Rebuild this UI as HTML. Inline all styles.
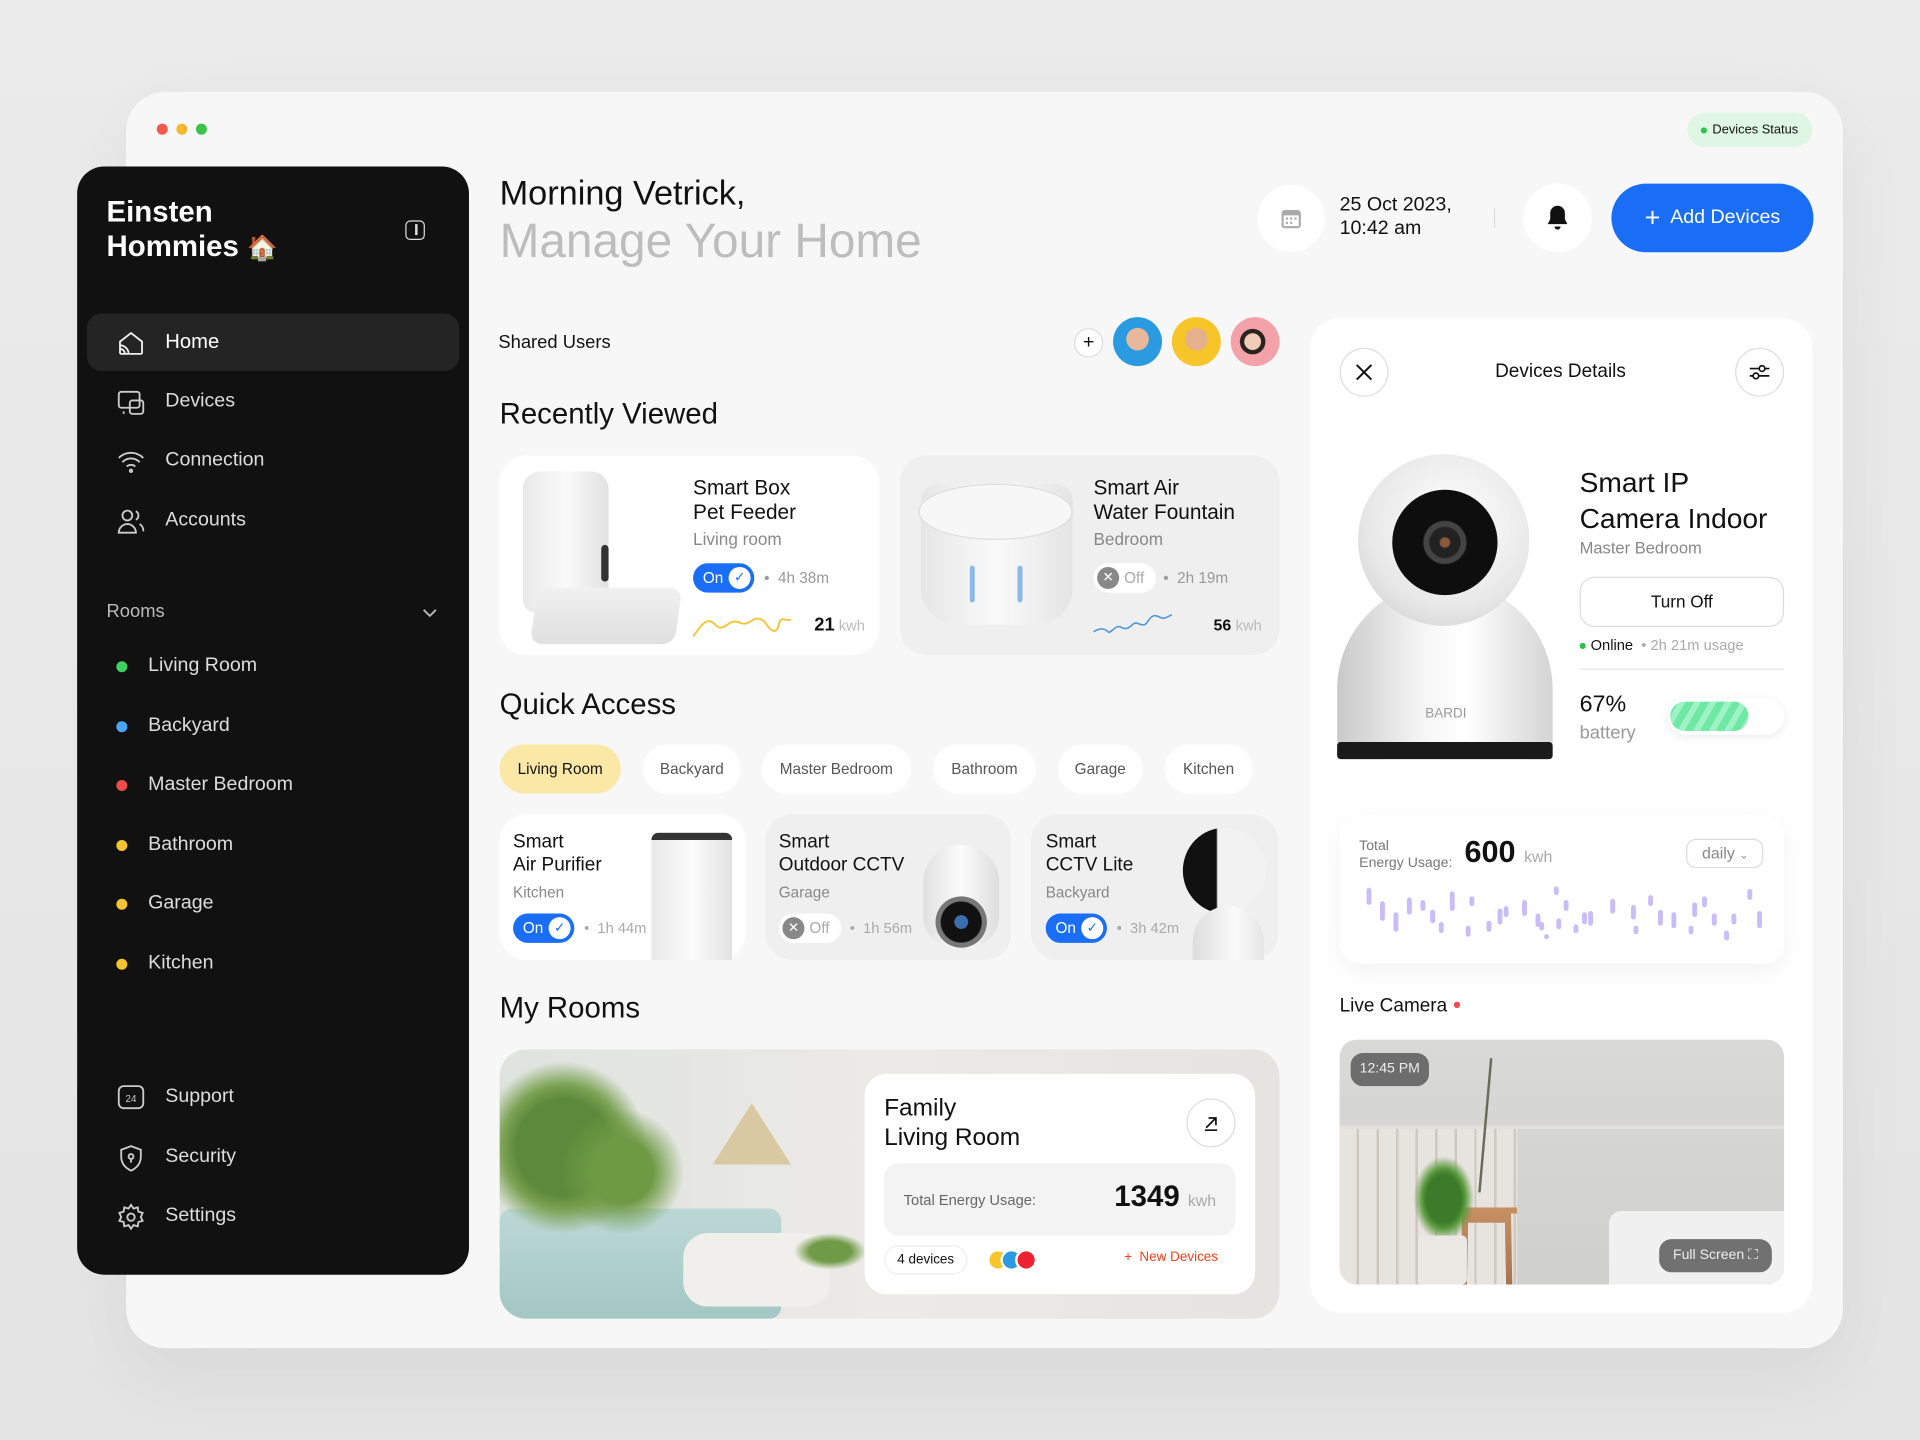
<!DOCTYPE html>
<html><head><meta charset="utf-8">
<style>
*{box-sizing:border-box;margin:0;padding:0}
html,body{width:1920px;height:1440px;overflow:hidden;background:#e8e8e8;font-family:"Liberation Sans",sans-serif;color:#111}
#s{position:absolute;left:0;top:0;width:1568px;height:1176px;transform:scale(1.22449);transform-origin:0 0;background:linear-gradient(#ebebeb,#e4e4e4)}
.a{position:absolute}
.card{background:#fff;border-radius:22px}
.pill{position:absolute;border-radius:999px}
.side{color:#ddd;font-size:16px}
.ico{position:absolute;width:24px;height:24px}
.dot{position:absolute;width:9px;height:9px;border-radius:50%}
.chip{position:absolute;top:608px;height:40px;border-radius:20px;background:#fff;font-size:12.5px;color:#555;display:flex;align-items:center;justify-content:center}
.tog{position:absolute;height:24px;border-radius:12px;display:flex;align-items:center;font-size:12.5px}
.gray{color:#888}
</style></head><body><div id="s">
<!-- main window -->
<div class="a" style="left:103px;top:75px;width:1402px;height:1026px;background:#f7f7f7;border-radius:32px;box-shadow:0 20px 60px rgba(0,0,0,.06)"></div>
<div class="dot" style="left:128px;top:101px;background:#f25a4f"></div>
<div class="dot" style="left:144px;top:101px;background:#f5b82e"></div>
<div class="dot" style="left:160px;top:101px;background:#3cc34a"></div>
<div class="pill" style="left:1378px;top:92px;width:102px;height:28px;background:#dff6e4;font-size:10.5px;display:flex;align-items:center;justify-content:center"><span style="width:5px;height:5px;border-radius:50%;background:#2cc14a;margin-right:4px"></span>Devices Status</div>

<!-- sidebar -->
<div class="a" style="left:63px;top:136px;width:320px;height:905px;background:#111;border-radius:22px"></div>
<div class="a" style="left:87px;top:160px;color:#fff;font-size:24px;font-weight:bold;line-height:28px">Einsten<br>Hommies <span style="font-size:20px">🏠</span></div>
<div class="a" style="left:331px;top:180px;width:16px;height:16px;border:1.6px solid #ddd;border-radius:4px"><div style="position:absolute;left:7px;top:2px;width:1.5px;height:9px;background:#ddd"></div></div>
<div class="a" style="left:71px;top:256px;width:304px;height:47px;background:#242424;border-radius:12px"></div>
<svg class="ico" style="left:95px;top:268px" viewBox="0 0 24 24" fill="none" stroke="#eee" stroke-width="1.5"><path d="M3 11l9-7 9 7v9a1 1 0 0 1-1 1H4a1 1 0 0 1-1-1z"/><path d="M3 17a4 4 0 0 1 4 4M3 14a7 7 0 0 1 7 7"/></svg>
<div class="a" style="left:135px;top:270px;color:#fff;font-size:16.5px">Home</div>
<svg class="ico" style="left:95px;top:317px" viewBox="0 0 24 24" fill="none" stroke="#ccc" stroke-width="1.5"><rect x="2" y="3" width="17" height="13" rx="2"/><rect x="11" y="10" width="11" height="11" rx="2"/><path d="M6 19v2"/></svg>
<div class="a side" style="left:135px;top:319px">Devices</div>
<svg class="ico" style="left:95px;top:365px" viewBox="0 0 24 24" fill="none" stroke="#ccc" stroke-width="1.5"><path d="M2 9a14 14 0 0 1 20 0M5 12.5a9.5 9.5 0 0 1 14 0M8.5 16a5 5 0 0 1 7 0"/><circle cx="12" cy="19.5" r="1"/></svg>
<div class="a side" style="left:135px;top:367px">Connection</div>
<svg class="ico" style="left:95px;top:414px" viewBox="0 0 24 24" fill="none" stroke="#ccc" stroke-width="1.5"><circle cx="9" cy="7" r="4"/><path d="M2 21a7 7 0 0 1 14 0z"/><path d="M16 3.5a4 4 0 0 1 0 7M19 14a6 6 0 0 1 3 6"/></svg>
<div class="a side" style="left:135px;top:416px">Accounts</div>
<div class="a" style="left:87px;top:491px;color:#bbb;font-size:15px">Rooms</div>
<svg class="a" style="left:344px;top:494px;width:14px;height:14px" viewBox="0 0 14 14" fill="none" stroke="#bbb" stroke-width="1.5"><path d="M2 4l5 5 5-5"/></svg>
<div class="dot" style="left:95px;top:540px;background:#3ed160"></div><div class="a side" style="left:121px;top:535px">Living Room</div>
<div class="dot" style="left:95px;top:589px;background:#4aa3ff"></div><div class="a side" style="left:121px;top:584px">Backyard</div>
<div class="dot" style="left:95px;top:637px;background:#f24b4b"></div><div class="a side" style="left:121px;top:632px">Master Bedroom</div>
<div class="dot" style="left:95px;top:686px;background:#f5c330"></div><div class="a side" style="left:121px;top:681px">Bathroom</div>
<div class="dot" style="left:95px;top:734px;background:#f5c330"></div><div class="a side" style="left:121px;top:729px">Garage</div>
<div class="dot" style="left:95px;top:783px;background:#f5c330"></div><div class="a side" style="left:121px;top:778px">Kitchen</div>
<svg class="ico" style="left:95px;top:885px" viewBox="0 0 24 24" fill="none" stroke="#ccc" stroke-width="1.5"><rect x="2" y="2" width="20" height="18" rx="4"/><text x="12" y="15" font-size="8" fill="#ccc" stroke="none" text-anchor="middle" font-family="Liberation Sans">24</text></svg>
<div class="a side" style="left:135px;top:887px">Support</div>
<svg class="ico" style="left:95px;top:934px" viewBox="0 0 24 24" fill="none" stroke="#ccc" stroke-width="1.5"><path d="M12 2l8 3v6c0 5-3.5 9-8 11-4.5-2-8-6-8-11V5z"/><circle cx="12" cy="10.5" r="2"/><path d="M12 12.5v3"/></svg>
<div class="a side" style="left:135px;top:936px">Security</div>
<svg class="ico" style="left:95px;top:982px" viewBox="0 0 24 24" fill="none" stroke="#ccc" stroke-width="1.5"><circle cx="12" cy="12" r="3"/><path d="M12 2l2 3 3.5-1 .5 3.5 3.5 1-1.5 3.5 1.5 3-3.5 1-.5 3.5-3.5-1-2 3-2-3-3.5 1-.5-3.5-3.5-1 1.5-3-1.5-3.5 3.5-1L6.5 4 10 5z"/></svg>
<div class="a side" style="left:135px;top:984px">Settings</div>

<!-- header -->
<div class="a" style="left:408px;top:142px;font-size:28px">Morning Vetrick,</div>
<div class="a" style="left:408px;top:176px;font-size:39px;color:#bdbdbd">Manage Your Home</div>
<div class="pill" style="left:1027px;top:151px;width:55px;height:55px;background:#fff"></div>
<svg class="a" style="left:1044px;top:168px;width:21px;height:21px" viewBox="0 0 24 24" fill="#aaa"><rect x="3" y="4" width="18" height="17" rx="3"/><rect x="5" y="9" width="14" height="10" fill="#fff"/><rect x="7" y="11" width="2" height="2"/><rect x="11" y="11" width="2" height="2"/><rect x="15" y="11" width="2" height="2"/><rect x="7" y="15" width="2" height="2"/><rect x="11" y="15" width="2" height="2"/></svg>
<div class="a" style="left:1094px;top:158px;font-size:16px;line-height:19px">25 Oct 2023,<br>10:42 am</div>
<div class="a" style="left:1220px;top:170px;width:1px;height:16px;background:#ddd"></div>
<div class="pill" style="left:1244px;top:150px;width:56px;height:56px;background:#fff"></div>
<svg class="a" style="left:1262px;top:167px;width:20px;height:22px" viewBox="0 0 20 22"><path d="M10 1a6 6 0 0 0-6 6v5l-2 4h16l-2-4V7a6 6 0 0 0-6-6z" fill="#111"/><path d="M7.5 18a2.5 2.5 0 0 0 5 0z" fill="#111"/></svg>
<div class="pill" style="left:1316px;top:150px;width:165px;height:56px;background:#1a6ef5;color:#fff;font-size:16px;display:flex;align-items:center;justify-content:center"><span style="font-size:22px;margin-right:8px;font-weight:300">+</span>Add Devices</div>

<!-- shared users -->
<div class="a" style="left:407px;top:271px;font-size:15px">Shared Users</div>
<div class="pill" style="left:877px;top:268px;width:24px;height:24px;border:1px solid #ddd;background:#fff;text-align:center;line-height:21px;font-size:16px">+</div>
<div class="pill" style="left:909px;top:259px;width:40px;height:40px;background:radial-gradient(circle at 50% 45%,#e8b89a 0 30%,#2a9be0 32%)"></div>
<div class="pill" style="left:957px;top:259px;width:40px;height:40px;background:radial-gradient(circle at 50% 45%,#e4b08e 0 30%,#f5c52a 32%)"></div>
<div class="pill" style="left:1005px;top:259px;width:40px;height:40px;background:radial-gradient(circle at 45% 50%,#f0cdb4 0 22%,#2a2220 24% 34%,#f2a2a8 36%)"></div>

<!-- recently viewed -->
<div class="a" style="left:408px;top:325px;font-size:24px">Recently Viewed</div>
<div class="a card" style="left:408px;top:372px;width:310px;height:163px"></div>
<div class="a" style="left:427px;top:385px;width:70px;height:115px;background:linear-gradient(90deg,#e8e8e8,#fafafa 50%,#e2e2e2);border-radius:14px 14px 10px 10px"></div>
<div class="a" style="left:436px;top:480px;width:118px;height:46px;background:linear-gradient(#f0f0f0,#e0e0e0);border-radius:10px;transform:skewX(-8deg)"></div>
<div class="a" style="left:491px;top:445px;width:6px;height:30px;background:#333;border-radius:3px"></div>
<div class="a" style="left:566px;top:389px;font-size:17px;line-height:20px">Smart Box<br>Pet Feeder</div>
<div class="a gray" style="left:566px;top:432px;font-size:14px">Living room</div>
<div class="tog" style="left:566px;top:460px;width:50px;background:#1a6ef5;color:#fff;padding-left:8px">On<span style="position:absolute;right:3px;top:3px;width:18px;height:18px;border-radius:50%;background:#fff;color:#1a6ef5;font-size:11px;text-align:center;line-height:18px">✓</span></div>
<div class="a gray" style="left:624px;top:465px;font-size:12.5px;color:#999">• &nbsp;4h 38m</div>
<svg class="a" style="left:566px;top:500px;width:90px;height:22px" viewBox="0 0 90 22" fill="none" stroke="#f4c430" stroke-width="1.5"><path d="M0 20C8 8 12 4 18 10s8 0 14-2 8 4 14 0 10-4 14 2 8 8 10 0 6-2 10-4"/></svg>
<div class="a" style="left:665px;top:502px;font-size:15px;font-weight:bold">21<span style="font-size:12px;color:#bbb;font-weight:normal"> kwh</span></div>

<div class="a" style="left:735px;top:372px;width:310px;height:163px;background:#efefef;border-radius:22px"></div>
<div class="a" style="left:752px;top:395px;width:124px;height:115px;background:linear-gradient(90deg,#e6e6e6,#fafafa 50%,#e4e4e4);border-radius:14px 14px 30px 30px"></div>
<div class="a" style="left:750px;top:395px;width:126px;height:46px;border-radius:50%;background:#f7f7f7;border:1px solid #ddd"></div>
<div class="a" style="left:792px;top:462px;width:4px;height:30px;background:#8bb8e8;border-radius:2px"></div>
<div class="a" style="left:831px;top:462px;width:4px;height:30px;background:#8bb8e8;border-radius:2px"></div>
<div class="a" style="left:893px;top:389px;font-size:17px;line-height:20px">Smart Air<br>Water Fountain</div>
<div class="a gray" style="left:893px;top:432px;font-size:14px">Bedroom</div>
<div class="tog" style="left:893px;top:460px;width:51px;background:#fff;color:#aaa;padding-left:25px"><span style="position:absolute;left:3px;top:3px;width:18px;height:18px;border-radius:50%;background:#888;color:#fff;font-size:11px;text-align:center;line-height:18px">✕</span>Off</div>
<div class="a" style="left:950px;top:465px;font-size:12.5px;color:#999">• &nbsp;2h 19m</div>
<svg class="a" style="left:893px;top:500px;width:80px;height:20px" viewBox="0 0 80 20" fill="none" stroke="#4e97d8" stroke-width="1.3"><path d="M0 16c6-4 10-2 12 0s6-6 10-4 6 2 10-2 8 4 12-2 6-6 10-4 6 0 10-2"/></svg>
<div class="a" style="left:991px;top:503px;font-size:13px;font-weight:bold">56 <span style="font-size:12px;color:#bbb;font-weight:normal">kwh</span></div>

<!-- quick access -->
<div class="a" style="left:408px;top:562px;font-size:24px">Quick Access</div>
<div class="chip" style="left:408px;width:99px;background:#fbe8a6;color:#111">Living Room</div>
<div class="chip" style="left:525px;width:80px">Backyard</div>
<div class="chip" style="left:622px;width:122px">Master Bedroom</div>
<div class="chip" style="left:762px;width:84px">Bathroom</div>
<div class="chip" style="left:864px;width:69px">Garage</div>
<div class="chip" style="left:951px;width:72px">Kitchen</div>

<div class="a card" style="left:408px;top:665px;width:201px;height:119px"></div>
<div class="a" style="left:532px;top:680px;width:66px;height:104px;background:linear-gradient(90deg,#e8e8e8,#fbfbfb 50%,#e2e2e2);border-radius:6px 6px 0 0;border-top:6px solid #333"></div>
<div class="a" style="left:419px;top:678px;font-size:15.5px;line-height:19px">Smart<br>Air Purifier</div>
<div class="a gray" style="left:419px;top:722px;font-size:12.5px">Kitchen</div>
<div class="tog" style="left:419px;top:746px;width:50px;background:#1a6ef5;color:#fff;padding-left:8px">On<span style="position:absolute;right:3px;top:3px;width:18px;height:18px;border-radius:50%;background:#fff;color:#1a6ef5;font-size:11px;text-align:center;line-height:18px">✓</span></div>
<div class="a" style="left:477px;top:751px;font-size:12px;color:#aaa">• &nbsp;1h 44m</div>

<div class="a" style="left:625px;top:665px;width:201px;height:119px;background:#efefef;border-radius:22px"></div>
<div class="a" style="left:754px;top:690px;width:62px;height:84px;background:linear-gradient(90deg,#e0e0e0,#fcfcfc 50%,#ddd);border-radius:30px 30px 26px 26px"></div>
<div class="a" style="left:764px;top:732px;width:42px;height:42px;border-radius:50%;background:radial-gradient(#3c6fb0 0 18%,#111 20% 55%,#777 58%)"></div>
<div class="a" style="left:636px;top:678px;font-size:15.5px;line-height:19px">Smart<br>Outdoor CCTV</div>
<div class="a gray" style="left:636px;top:722px;font-size:12.5px">Garage</div>
<div class="tog" style="left:636px;top:746px;width:51px;background:#fff;color:#aaa;padding-left:25px"><span style="position:absolute;left:3px;top:3px;width:18px;height:18px;border-radius:50%;background:#888;color:#fff;font-size:11px;text-align:center;line-height:18px">✕</span>Off</div>
<div class="a" style="left:694px;top:751px;font-size:12px;color:#aaa">• &nbsp;1h 56m</div>

<div class="a" style="left:842px;top:665px;width:202px;height:119px;background:#efefef;border-radius:22px"></div>
<div class="a" style="left:966px;top:676px;width:68px;height:70px;border-radius:50%;background:linear-gradient(90deg,#111 0 40%,#f2f2f2 42%)"></div>
<div class="a" style="left:974px;top:740px;width:58px;height:44px;border-radius:30px 30px 0 0;background:linear-gradient(90deg,#ddd,#fafafa 60%,#e5e5e5)"></div>
<div class="a" style="left:854px;top:678px;font-size:15.5px;line-height:19px">Smart<br>CCTV Lite</div>
<div class="a gray" style="left:854px;top:722px;font-size:12.5px">Backyard</div>
<div class="tog" style="left:854px;top:746px;width:50px;background:#1a6ef5;color:#fff;padding-left:8px">On<span style="position:absolute;right:3px;top:3px;width:18px;height:18px;border-radius:50%;background:#fff;color:#1a6ef5;font-size:11px;text-align:center;line-height:18px">✓</span></div>
<div class="a" style="left:912px;top:751px;font-size:12px;color:#aaa">• &nbsp;3h 42m</div>

<!-- my rooms -->
<div class="a" style="left:408px;top:810px;font-size:24px">My Rooms</div>
<div class="a" style="left:408px;top:857px;width:637px;height:220px;border-radius:22px;overflow:hidden;background:linear-gradient(90deg,#dfe3df,#eceae6 50%,#e6e4e0)">
 <div class="a" style="left:0;top:130px;width:230px;height:90px;background:linear-gradient(#bcd8d6,#a3c7c4);border-radius:10px"></div>
 <div class="a" style="left:150px;top:150px;width:120px;height:60px;background:#f0efec;border-radius:20px"></div>
 <div class="a" style="left:0;top:0;width:130px;height:160px;background:radial-gradient(ellipse at 40% 50%,#5d8a3a 0 35%,#7aa253 45%,transparent 62%)"></div>
 <div class="a" style="left:40px;top:40px;width:120px;height:120px;background:radial-gradient(ellipse at 50% 50%,#6e9a44 0 30%,transparent 60%)"></div>
 <div class="a" style="left:174px;top:44px;width:0;height:0;border-left:32px solid transparent;border-right:32px solid transparent;border-bottom:50px solid #d9c9a2"></div>
 <div class="a" style="left:240px;top:150px;width:60px;height:30px;background:radial-gradient(#6f9a46 0 40%,transparent 70%)"></div>
</div>
<div class="a" style="left:706px;top:877px;width:319px;height:180px;background:#fff;border-radius:18px"></div>
<div class="a" style="left:722px;top:893px;font-size:20px;line-height:24px">Family<br>Living Room</div>
<div class="pill" style="left:969px;top:897px;width:40px;height:40px;border:1px solid #ddd"></div>
<svg class="a" style="left:981px;top:909px;width:16px;height:16px" viewBox="0 0 16 16" fill="none" stroke="#111" stroke-width="1.4"><path d="M4 12L12 4M6 4h6v6M3 14h10"/></svg>
<div class="a" style="left:722px;top:950px;width:287px;height:59px;background:#f3f3f3;border-radius:12px"></div>
<div class="a" style="left:738px;top:973px;font-size:12px;color:#666">Total Energy Usage:</div>
<div class="a" style="left:910px;top:964px;font-size:24px;font-weight:bold">1349 <span style="font-size:13px;color:#aaa;font-weight:normal">kwh</span></div>
<div class="pill" style="left:722px;top:1017px;width:68px;height:24px;border:1px solid #eee;font-size:11px;text-align:center;line-height:22px">4 devices</div>
<div class="pill" style="left:806px;top:1020px;width:18px;height:18px;background:#f5c52a;border:2px solid #fff"></div>
<div class="pill" style="left:817px;top:1020px;width:18px;height:18px;background:#2a9be0;border:2px solid #fff"></div>
<div class="pill" style="left:829px;top:1020px;width:18px;height:18px;background:#e23;border:2px solid #fff"></div>
<div class="a" style="left:918px;top:1021px;font-size:11px;color:#f0451e">+ &nbsp;New Devices</div>

<!-- right panel -->
<div class="a" style="left:1070px;top:260px;width:410px;height:812px;background:#fff;border-radius:24px"></div>
<div class="pill" style="left:1094px;top:284px;width:40px;height:40px;border:1px solid #ddd"></div>
<svg class="a" style="left:1106px;top:296px;width:16px;height:16px" viewBox="0 0 16 16" stroke="#111" stroke-width="1.6"><path d="M2 2l12 12M14 2L2 14"/></svg>
<div class="a" style="left:1221px;top:295px;font-size:15.5px">Devices Details</div>
<div class="pill" style="left:1417px;top:284px;width:40px;height:40px;border:1px solid #ddd"></div>
<svg class="a" style="left:1427px;top:294px;width:20px;height:20px" viewBox="0 0 20 20" fill="none" stroke="#111" stroke-width="1.4"><path d="M2 7h16M2 13h16"/><circle cx="12" cy="7" r="2.3" fill="#fff"/><circle cx="7" cy="13" r="2.3" fill="#fff"/></svg>
<div class="a" style="left:1092px;top:475px;width:176px;height:145px;border-radius:88px 88px 4px 4px;background:linear-gradient(90deg,#c9c9c9,#f6f6f6 40%,#fff 60%,#d4d4d4)"></div>
<div class="a" style="left:1092px;top:606px;width:176px;height:14px;background:#1a1a1a;border-radius:3px"></div>
<div class="a" style="left:1109px;top:371px;width:140px;height:140px;border-radius:50%;background:radial-gradient(circle at 55% 40%,#fff,#e8e8e8 60%,#c8c8c8)"></div>
<div class="a" style="left:1137px;top:400px;width:86px;height:86px;border-radius:50%;background:radial-gradient(#8a5a3a 0 6%,#222 8% 20%,#444 22% 28%,#0e0e0e 30%)"></div>
<div class="a" style="left:1164px;top:577px;font-size:11px;color:#999">BARDI</div>
<div class="a" style="left:1290px;top:380px;font-size:23px;line-height:29px">Smart IP<br>Camera Indoor</div>
<div class="a gray" style="left:1290px;top:440px;font-size:13.5px">Master Bedroom</div>
<div class="a" style="left:1290px;top:471px;width:167px;height:41px;border:1px solid #ddd;border-radius:12px;text-align:center;line-height:39px;font-size:14px">Turn Off</div>
<div class="a" style="left:1290px;top:520px;font-size:12px"><span style="display:inline-block;width:5px;height:5px;border-radius:50%;background:#2cc14a;vertical-align:middle;margin-right:4px"></span>Online <span style="color:#aaa">&nbsp;• 2h 21m usage</span></div>
<div class="a" style="left:1290px;top:546px;width:167px;height:1px;background:#e6e6e6"></div>
<div class="a" style="left:1290px;top:565px;font-size:19px">67%</div>
<div class="a gray" style="left:1290px;top:590px;font-size:15px;color:#999">battery</div>
<div class="pill" style="left:1362px;top:570px;width:95px;height:30px;background:#fff;box-shadow:0 2px 8px rgba(0,0,0,.08)"></div>
<div class="pill" style="left:1364px;top:573px;width:64px;height:24px;background:repeating-linear-gradient(120deg,#6ee8a4 0 6px,#9ef2c4 6px 11px)"></div>

<div class="a" style="left:1094px;top:666px;width:363px;height:121px;background:#fff;border-radius:16px;box-shadow:0 6px 20px rgba(0,0,0,.05)"></div>
<div class="a" style="left:1110px;top:684px;font-size:11.5px;color:#777;line-height:14px">Total<br>Energy Usage:</div>
<div class="a" style="left:1196px;top:682px;font-size:25px;font-weight:bold">600 <span style="font-size:13px;color:#aaa;font-weight:normal">kwh</span></div>
<div class="a" style="left:1377px;top:685px;width:63px;height:24px;border:1px solid #ddd;border-radius:8px;font-size:13px;color:#888;line-height:22px;padding-left:12px">daily <span style="font-size:9px">⌄</span></div>
<svg class="a" style="left:1110px;top:718px;width:335px;height:55px" viewBox="0 0 335 55" stroke="#c9bdf7" stroke-width="4" stroke-linecap="round">
<path d="M8 9v10M19 20v12M30 29v12M41 17v10M52 19v5M60 27v7M67 37v5M76 12v12M89 40v5M92 16v4M106 36v5M115 26v9M120 24v5M135 19v9M146 30v7M149 37v3M153 47v0M161 8v3M163 34v5M169 19v5M177 39v3M184 29v6M189 28v8M207 18v8M224 23v8M226 40v3M238 15v5M246 27v9M257 29v9M271 40v3M274 21v8M282 16v5M290 30v6M300 44v4M306 30v5M319 10v5M327 28v10"/></svg>

<div class="a" style="left:1094px;top:813px;font-size:15.5px">Live Camera <span style="color:#f24b4b;font-size:12px;vertical-align:top">●</span></div>
<div class="a" style="left:1094px;top:849px;width:363px;height:200px;border-radius:14px;overflow:hidden;background:linear-gradient(#d9d9d8,#cfcfcd)">
 <div class="a" style="left:0;top:72px;width:145px;height:128px;background:repeating-linear-gradient(90deg,#e7e3de 0 14px,#cfc8c0 14px 16px)"></div>
 <div class="a" style="left:0;top:70px;width:363px;height:3px;background:#e3e0dc"></div>
 <div class="a" style="left:220px;top:140px;width:143px;height:60px;background:#f0f0f0;border-radius:10px 0 0 0"></div>
 <div class="a" style="left:95px;top:137px;width:50px;height:63px;background:linear-gradient(#c69063,#a87350);clip-path:polygon(0 0,100% 0,100% 8%,90% 8%,92% 100%,82% 100%,80% 20%,20% 20%,18% 100%,8% 100%,10% 8%,0 8%)"></div>
 <div class="a" style="left:60px;top:95px;width:50px;height:70px;background:radial-gradient(#3d7a2a 0 40%,#5b9a3e 50%,transparent 70%)"></div>
 <div class="a" style="left:64px;top:160px;width:40px;height:40px;background:#ebe7e2;border-radius:4px"></div>
 <div class="a" style="left:118px;top:15px;width:2px;height:110px;background:#6a6a5a;transform:rotate(5deg)"></div>
</div>
<div class="a" style="left:1103px;top:860px;width:64px;height:27px;border-radius:10px;background:rgba(90,90,90,.85);color:#eee;font-size:11.5px;text-align:center;line-height:27px">12:45 PM</div>
<div class="a" style="left:1355px;top:1012px;width:92px;height:27px;border-radius:10px;background:rgba(90,90,90,.85);color:#eee;font-size:11.5px;text-align:center;line-height:27px">Full Screen ⛶</div>
</div></body></html>
